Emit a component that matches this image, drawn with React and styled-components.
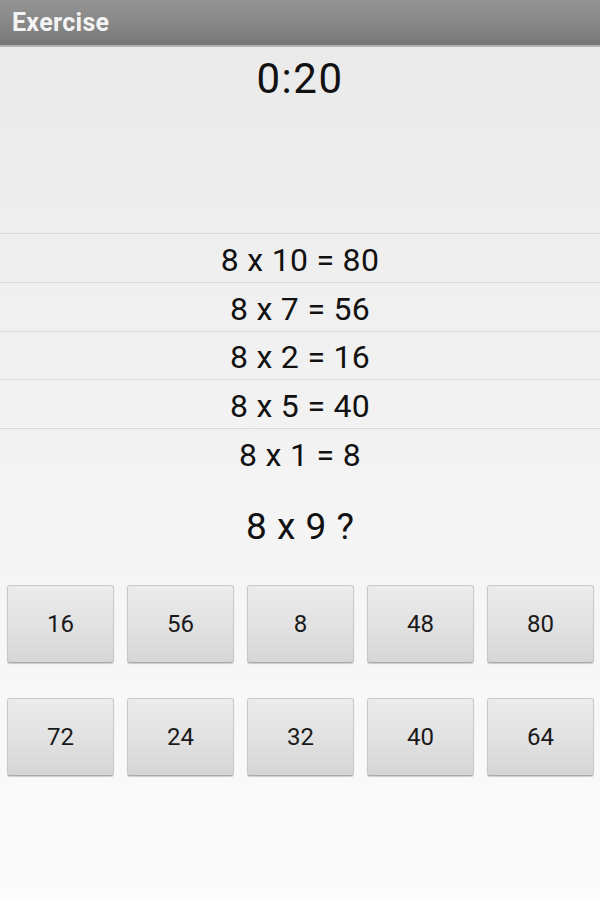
import React from "react";
import styled, { createGlobalStyle } from "styled-components";

const Global = createGlobalStyle`
  html, body { margin: 0; padding: 0; }
  body {
    width: 600px;
    height: 900px;
    overflow: hidden;
    font-family: Roboto, "Noto Sans", "Liberation Sans", sans-serif;
    background: #ececec;
  }
`;

const Screen = styled.div`
  width: 600px;
  height: 900px;
  display: flex;
  flex-direction: column;
  background: linear-gradient(to bottom, #e9e9e9 0%, #f3f3f3 50%, #fbfbfb 100%);
`;

const TitleBar = styled.div`
  height: 45px;
  display: flex;
  align-items: center;
  padding-left: 12px;
  background: linear-gradient(to bottom, #949494 0%, #858585 60%, #767676 100%);
  border-bottom: 2px solid #b4b4b4;
  color: #f4f4f4;
  font-size: 25px;
  font-weight: 700;
  letter-spacing: 0.3px;
`;

const TimerArea = styled.div`
  height: 186px;
  display: flex;
  justify-content: center;
  padding-top: 6px;
  box-sizing: border-box;
`;

const Timer = styled.div`
  font-size: 42px;
  line-height: 52px;
  color: #111;
  letter-spacing: 1.5px;
`;

const List = styled.div`
  display: flex;
  flex-direction: column;
`;

const Row = styled.div`
  height: 48.75px;
  box-sizing: border-box;
  border-top: ${(p) => (p.$line ? "1.5px solid #dadada" : "none")};
  display: flex;
  align-items: center;
  justify-content: center;
  padding-top: 4px;
  font-size: 32px;
  letter-spacing: 0.3px;
  color: #111;
`;

const Question = styled.div`
  margin-top: 24px;
  height: 52px;
  display: flex;
  align-items: center;
  justify-content: center;
  font-size: 37px;
  color: #111;
  word-spacing: 1px;
`;

const Grid = styled.div`
  margin-top: 32px;
  padding: 0 6px 0 7px;
  display: grid;
  grid-template-columns: repeat(5, 107px);
  grid-auto-rows: 78px;
  column-gap: 13px;
  row-gap: 35px;
`;

const Answer = styled.button`
  font-family: Roboto, "Noto Sans", sans-serif;
  font-size: 24px;
  color: #1a1a1a;
  border: 1px solid #c9c9c9;
  border-bottom-color: #a9a9a9;
  border-radius: 3px;
  background: linear-gradient(to bottom, #ececec 0%, #e2e2e2 50%, #d6d6d6 100%);
  box-shadow: 0 1px 1px rgba(0, 0, 0, 0.18);
  padding: 0;
  display: flex;
  align-items: center;
  justify-content: center;
`;

const history = ["8 x 10 = 80", "8 x 7 = 56", "8 x 2 = 16", "8 x 5 = 40", "8 x 1 = 8"];
const answers = [16, 56, 8, 48, 80, 72, 24, 32, 40, 64];

export default function App() {
  return (
    <Screen>
      <Global />
      <TitleBar>Exercise</TitleBar>
      <TimerArea>
        <Timer>0:20</Timer>
      </TimerArea>
      <List>
        {history.map((h, i) => (
          <Row key={h} $line={i < 5}>
            {h}
          </Row>
        ))}
      </List>
      <Question>8 x 9 ?</Question>
      <Grid>
        {answers.map((a) => (
          <Answer key={a}>{a}</Answer>
        ))}
      </Grid>
    </Screen>
  );
}
